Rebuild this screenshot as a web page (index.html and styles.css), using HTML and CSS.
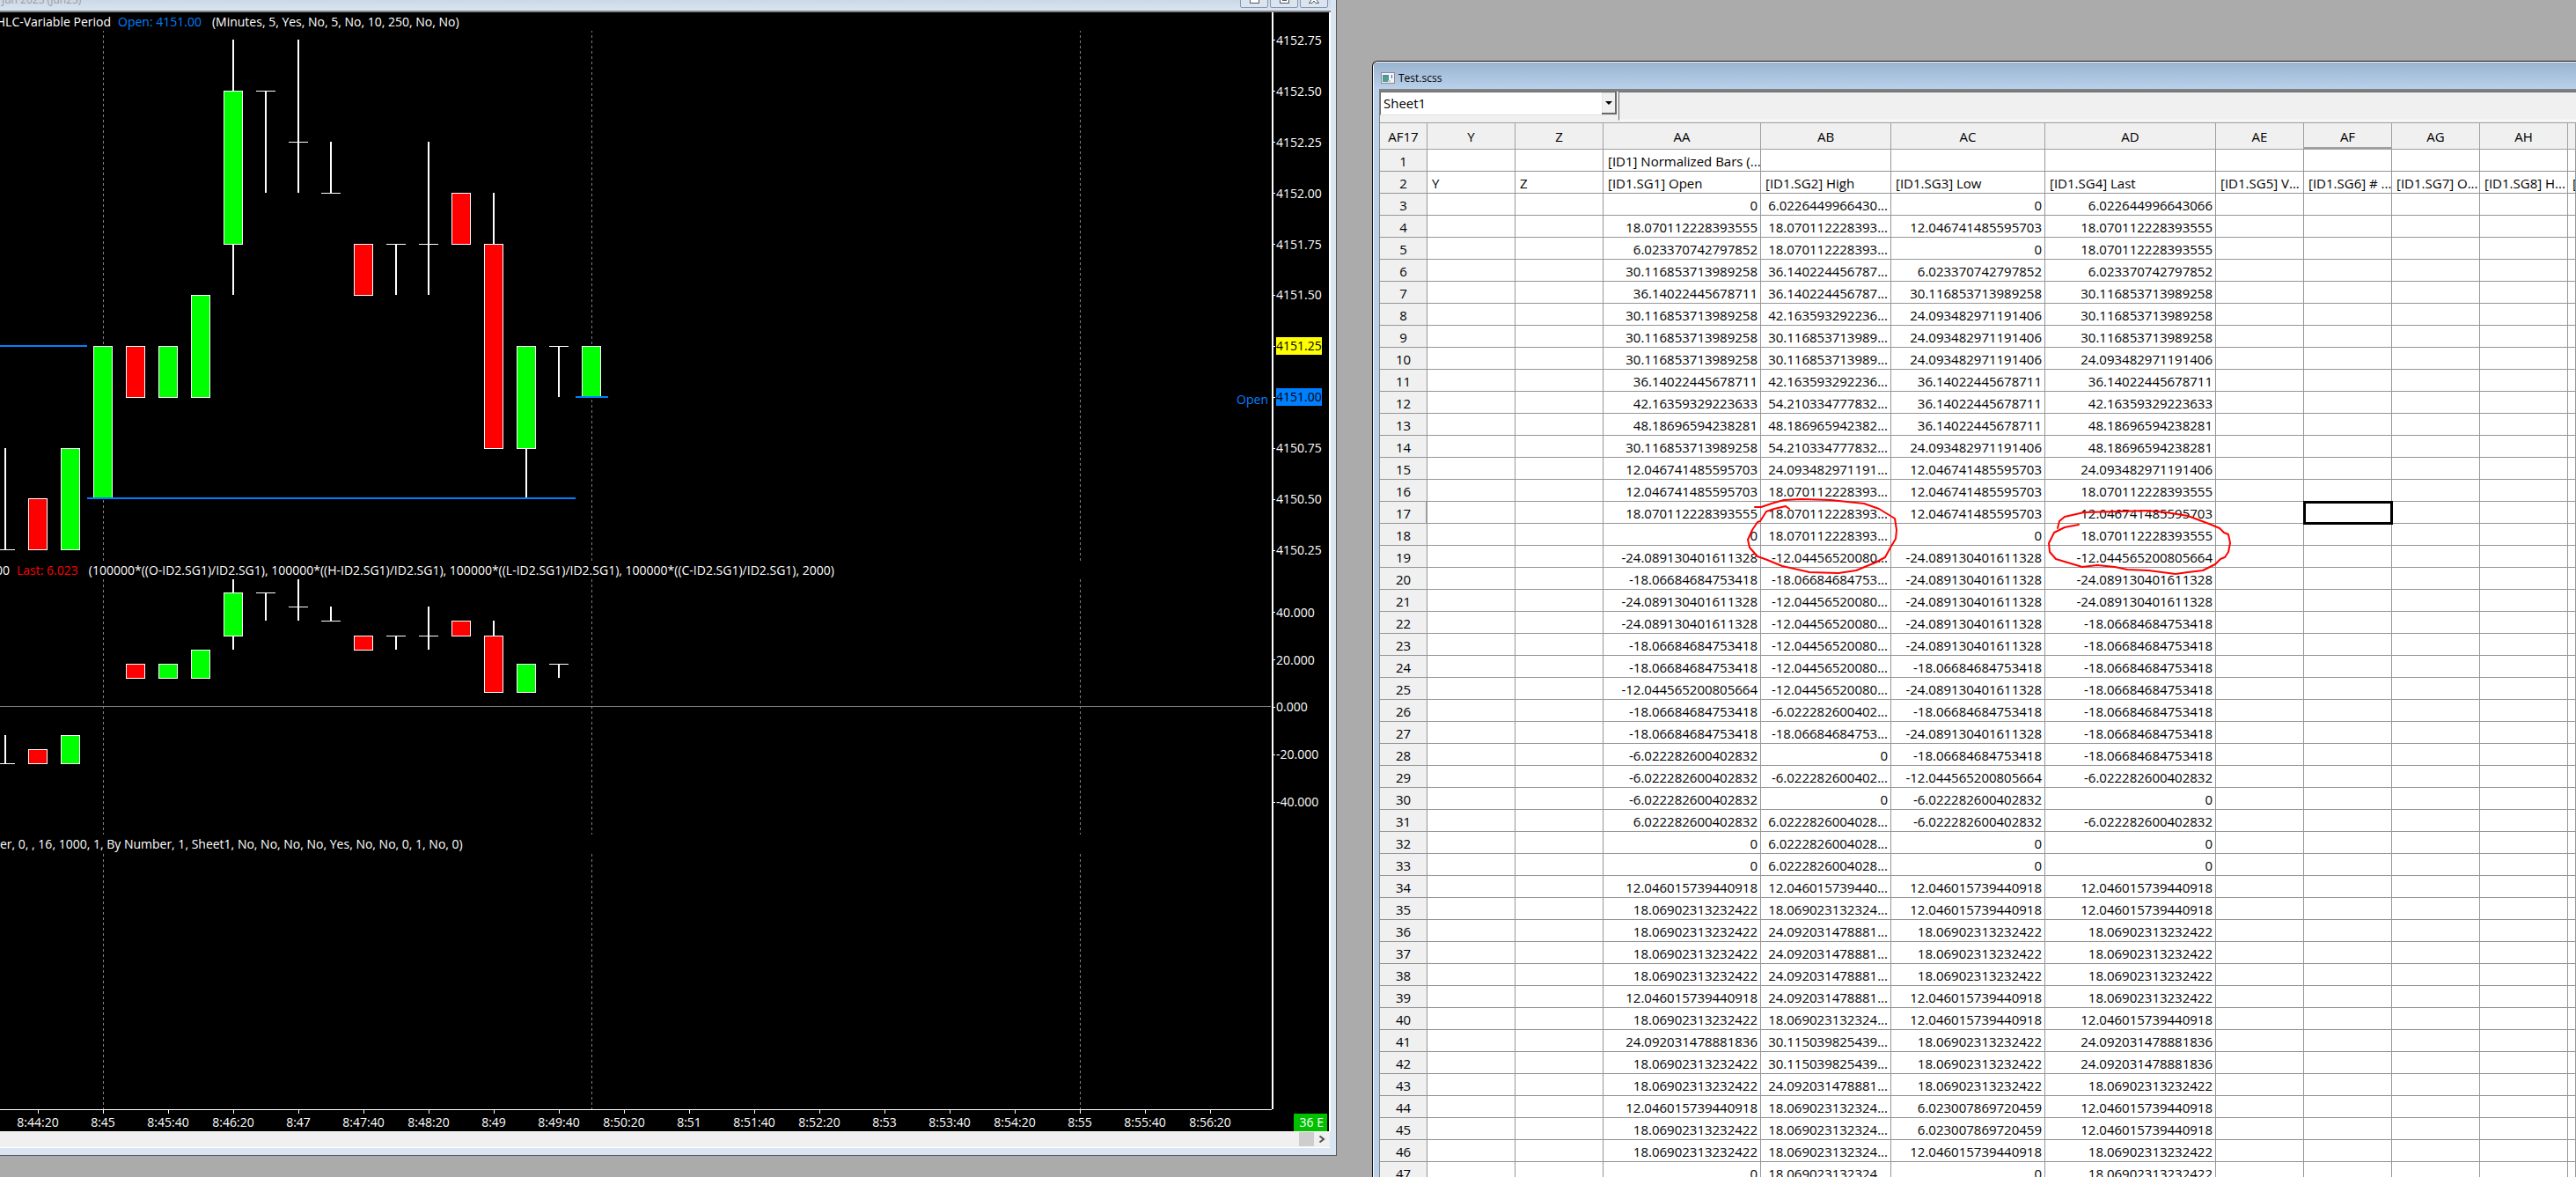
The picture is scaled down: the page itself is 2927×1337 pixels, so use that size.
FILE: index.html
```html
<!DOCTYPE html>
<html lang="en">
<head>
<meta charset="utf-8">
<title>Trading workspace</title>
<link rel="stylesheet" href="styles.css">
</head>
<body>
<main class="desktop">
  <section class="chart-window" aria-label="Chart">
    <header class="chart-title">
      <span class="chart-name">Jun 2023 (Jun23)</span>
      <div class="window-buttons">
        <button type="button" aria-label="Minimize"><svg width="12" height="12" viewBox="0 0 12 12"><rect x="1.5" y="5.5" width="10" height="5" fill="#fff" stroke="#555a68"/></svg></button>
        <button type="button" aria-label="Restore"><svg width="12" height="12" viewBox="0 0 12 12"><rect x="1.5" y="1.500" width="10" height="9" fill="#fff" stroke="#555a68"/><rect x="4.500" y="5.500" width="4" height="2" fill="#cfdbe8" stroke="#555a68"/></svg></button>
        <button type="button" aria-label="Close"><svg width="12" height="12" viewBox="0 0 12 12"><path d="M1 1h3l2 2 2-2h3L8 5.500l3.500 5H8L6 8l-2 2.500H.5L4 5.500z" fill="#fff" stroke="#555a68"/></svg></button>
      </div>
    </header>
    <div class="chart-client">
      <div class="chart-panes">
        <div class="pane-head">
          <span class="head-clip study-name">HLC-Variable Period</span>
          <span class="open">Open: 4151.00</span>
          <span>(Minutes, 5, Yes, No, 5, No, 10, 250, No, No)</span>
        </div>
        <div class="pane pane-price">
          <svg id="price" viewBox="0 35 1445 602" preserveAspectRatio="none"></svg>
          <span class="open-tag">Open</span>
        </div>
        <div class="pane-head">
          <span class="head-clip last-name">00</span>
          <span class="last">Last: 6.023</span>
          <span>(100000*((O-ID2.SG1)/ID2.SG1), 100000*((H-ID2.SG1)/ID2.SG1), 100000*((L-ID2.SG1)/ID2.SG1), 100000*((C-ID2.SG1)/ID2.SG1), 2000)</span>
        </div>
        <div class="pane pane-norm"><svg id="norm" viewBox="0 658 1445 290" preserveAspectRatio="none"></svg></div>
        <div class="pane-head">
          <span>er, 0, , 16, 1000, 1, By Number, 1, Sheet1, No, No, No, No, Yes, No, No, 0, 1, No, 0)</span>
        </div>
        <div class="pane pane-sheet"><svg id="blank" viewBox="0 969 1445 291" preserveAspectRatio="none"></svg></div>
      </div>
      <div class="axis">
        <ol class="scale scale-price">
          <li>4152.75</li><li>4152.50</li><li>4152.25</li><li>4152.00</li><li>4151.75</li><li>4151.50</li>
          <li><mark class="mark-last">4151.25</mark></li>
          <li><mark class="mark-open">4151.00</mark></li>
          <li>4150.75</li><li>4150.50</li><li>4150.25</li>
        </ol>
        <ol class="scale scale-norm">
          <li>40.000</li><li>20.000</li><li>0.000</li><li>-20.000</li><li>-40.000</li>
        </ol>
      </div>
      <ol class="times">
        <li>8:44:20</li><li>8:45</li><li>8:45:40</li><li>8:46:20</li><li>8:47</li><li>8:47:40</li><li>8:48:20</li><li>8:49</li><li>8:49:40</li><li>8:50:20</li><li>8:51</li><li>8:51:40</li><li>8:52:20</li><li>8:53</li><li>8:53:40</li><li>8:54:20</li><li>8:55</li><li>8:55:40</li><li>8:56:20</li>
      </ol>
      <div class="corner"><span class="badge">36 E</span></div>
    </div>
    <div class="scrollbar">
      <span class="thumb"></span>
      <button type="button" aria-label="Scroll right"><svg width="8" height="8" viewBox="0 0 8 8"><path d="M1.500 0.500 6 4 1.500 7.500" fill="none" stroke="#505050" stroke-width="2"/></svg></button>
    </div>
  </section>

  <section class="sheet-window" aria-label="Spreadsheet">
    <header class="sheet-title">
      <svg width="16" height="14" viewBox="0 0 16 14"><rect x=".5" y=".5" width="15" height="12" fill="#f4f4f4" stroke="#8b8b93"/><rect x="2" y="3" width="7" height="8" fill="#4f93a8"/><rect x="3" y="6" width="5" height="4" fill="#4ea577"/><rect x="12" y="3" width="1" height="4" fill="#2c6fa8"/><rect x="8" y="9" width="3" height="2" fill="#c9c9c9"/></svg>
      <span>Test.scss</span>
    </header>
    <div class="sheet-client">
      <div class="sheet-tools">
        <div class="sheet-pick">
          <select aria-label="Sheet"><option>Sheet1</option></select>
          <span class="pick-arrow"></span>
        </div>
        <input class="formula" type="text" aria-label="Formula">
      </div>
      <div class="grid-area">
        <table class="grid">
          <colgroup>
            <col class="c-num"><col class="c-std"><col class="c-std"><col class="c-open"><col class="c-high"><col class="c-low"><col class="c-last"><col class="c-std"><col class="c-std"><col class="c-std"><col class="c-std"><col>
          </colgroup>
          <thead>
            <tr><th>AF17</th><th>Y</th><th>Z</th><th>AA</th><th>AB</th><th>AC</th><th>AD</th><th>AE</th><th class="col-active">AF</th><th>AG</th><th>AH</th><th></th></tr>
          </thead>
          <tbody id="rows">
            <tr class="names"><th>1</th><td></td><td></td><td>[ID1] Normalized Bars (...</td><td></td><td></td><td></td><td></td><td></td><td></td><td></td><td></td></tr>
            <tr class="names"><th>2</th><td>Y</td><td>Z</td><td>[ID1.SG1] Open</td><td>[ID1.SG2] High</td><td>[ID1.SG3] Low</td><td>[ID1.SG4] Last</td><td>[ID1.SG5] V...</td><td>[ID1.SG6] # ...</td><td>[ID1.SG7] O...</td><td>[ID1.SG8] H...</td><td>[</td></tr>
          </tbody>
        </table>
        <svg class="ink" width="1000" height="600" viewBox="1568 139 1000 600" aria-hidden="true">
          <path d="M1994 576H2001L2016 571 2027 568 2047 567 2080 568 2118 572 2135 578 2153 589 2155 602 2154 612 2148 622 2142 633 2131 639 2109 648 2089 651 2056 650 2025 643 2008 636 1997 632 1988 622 1986 613 1991 602 1997 593 2000 592 2007 581 2016 578 2029 575 2033 578"/>
          <path d="M2338 600 2340 592 2346 587 2368 582 2408 581 2439 580 2461 582 2486 586 2510 595 2522 600 2527 605 2532 607 2534 617 2532 627 2528 633 2523 635 2517 641 2503 648 2486 650 2472 652 2441 648 2417 647 2403 644 2383 642 2366 644 2336 635 2329 627 2328 617 2332 609 2334 605 2346 599 2362 596"/>
        </svg>
      </div>
    </div>
  </section>
</main>
<script src="workspace.js"></script>
</body>
</html>
```

FILE: styles.css
```css
* { box-sizing: border-box; }

body {
  margin: 0;
  background: #ababab;
  color: #000;
  font: 14px/20px "Open Sans", "Noto Sans", sans-serif;
}

ol { margin: 0; padding: 0; list-style: none; }
button { padding: 0; font: inherit; }
svg { display: block; }

.desktop {
  display: grid;
  grid-template-columns: 1519fr 1368fr;
  column-gap: 40px;
  height: 100vh;
  overflow: hidden;
}

/* chart window */
.chart-window {
  display: flex;
  flex-direction: column;
  height: calc(100vh - 24px);
  padding-right: 6px;
  padding-bottom: 8px;
  border-right: 1px solid #55585e;
  border-bottom: 1px solid #55585e;
  background: #d9e5f1;
}

.chart-title {
  display: flex;
  flex: none;
  justify-content: space-between;
  align-items: flex-end;
  height: 14px;
  padding-left: 2px;
  border-bottom: 2px solid #7f8487;
  background: linear-gradient(#cbd8e6, #d9e5f1);
}

.chart-name {
  align-self: flex-start;
  margin-top: -10px;
  color: #9b9b9b;
  font-size: 12px;
  line-height: 20px;
}

.window-buttons { display: flex; gap: 2px; margin-top: -16px; align-self: flex-start; padding-right: 3px; }

.window-buttons button {
  display: flex;
  justify-content: center;
  align-items: flex-end;
  width: 32px;
  height: 25px;
  padding-bottom: 3px;
  border: 1px solid #8996b1;
  border-radius: 2px;
  background: #dbe5f0;
}

.chart-client {
  display: grid;
  grid-template: minmax(0, 1fr) 25px / minmax(0, 1fr) 65px;
  flex: 1;
  min-height: 0;
  border-right: 2px solid #fff;
  background: #000;
  color: #fff;
}

.chart-panes { display: flex; flex-direction: column; min-height: 0; }

.pane-head {
  display: flex;
  flex: none;
  height: 21px;
  overflow: hidden;
  line-height: 22px;
  white-space: pre;
}

.head-clip { display: flex; flex: none; justify-content: flex-end; overflow: hidden; }
.study-name { width: 126px; margin-right: 8px; }
.last-name { width: 11px; margin-right: 8px; }
.open { margin-right: 12px; color: #0080ff; }
.last { margin-right: 12px; color: #f00; }

.pane { position: relative; min-height: 0; }
.pane svg { width: 100%; height: 100%; }
.pane-price { flex: 602 1 0; }
.pane-norm { flex: 290 1 0; }
.pane-sheet { flex: 291 1 0; }

.open-tag { position: absolute; right: 4px; top: 68%; color: #0080ff; }

.day-line { stroke: #808080; stroke-dasharray: 3 3; }
.zero-line { stroke: #808080; }
.open-line { stroke: #0080ff; stroke-width: 2; }
.wick { stroke: #fff; stroke-width: 2; }
.tick { stroke: #fff; }
.up { fill: #0f0; stroke: #fff; }
.down { fill: #f00; stroke: #fff; }

.axis {
  display: flex;
  flex-direction: column;
  min-height: 0;
  padding-top: 3px;
  border-left: 2px solid #fff;
}

.scale { display: flex; flex-direction: column; }
.scale li { display: flex; flex: 1; align-items: center; gap: 1px; }
.scale li::before { content: ""; width: 2px; height: 1px; background: #fff; }
.scale-price { flex: 637 1 0; }
.scale-norm { flex: 269 1 0; margin-top: 15px; }
.axis::after { content: ""; flex: 322 1 0; }

mark { color: #000; }
.mark-last { background: #ff0; }
.mark-open { background: #0080ff; }

.times {
  display: flex;
  padding: 0 33px 0 6px;
  border-top: 1px solid #fff;
}

.times li {
  display: flex;
  flex: 1;
  flex-direction: column;
  align-items: center;
}

.times li::before { content: ""; flex: none; width: 1px; height: 4px; background: #fff; }

.corner { display: flex; justify-content: flex-end; align-items: flex-end; }

.badge {
  width: 38px;
  height: 20px;
  padding-right: 4px;
  margin-right: 2px;
  background: #00c000;
  text-align: right;
}

.scrollbar {
  display: flex;
  flex: none;
  justify-content: flex-end;
  height: 19px;
  margin-right: 1px;
  padding: 1px 0 1px;
  border-bottom: 1px solid #fff;
  background: #f0f0f0;
}

.thumb { width: 17px; background: #cdcdcd; }

.scrollbar button {
  display: flex;
  justify-content: center;
  align-items: center;
  width: 18px;
  border: 0;
  background: none;
}

/* spreadsheet window */
.sheet-window {
  display: flex;
  flex-direction: column;
  min-width: 0;
  min-height: 0;
  margin-top: 69px;
  padding-left: 7px;
  border: solid #111;
  border-width: 1px 0 0 1px;
  border-radius: 6px 0 0 0;
  background: #b9d1ea;
  overflow: hidden;
  box-shadow: inset 1px 1px #fff;
}

.sheet-title {
  display: flex;
  flex: none;
  align-items: center;
  gap: 4px;
  height: 30px;
  margin: 1px 0 0 -6px;
  padding: 6px 0 0 8px;
  background: linear-gradient(#9ab3d0, #b9d1ea);
  font-size: 12px;
}

.sheet-client {
  display: flex;
  flex: 1;
  flex-direction: column;
  min-height: 0;
  border: solid #808080;
  border-width: 3px 0 0 1px;
  background: #f0f0f0;
}

.sheet-tools {
  display: flex;
  flex: none;
  align-items: flex-start;
  gap: 2px;
  height: 35px;
}

.sheet-pick {
  display: flex;
  align-items: stretch;
  width: 269px;
  height: 27px;
  border: solid #696969;
  border-width: 1px 0 1px 1px;
  border-bottom-color: #e3e3e3;
  background: #fff;
}

.sheet-pick select {
  flex: 1;
  min-width: 0;
  padding: 0 3px 2px;
  border: 0;
  background: none;
  color: #000;
  font: inherit;
  font-size: 15px;
  appearance: none;
}

.pick-arrow {
  display: flex;
  justify-content: center;
  align-items: center;
  width: 17px;
  border: solid #696969;
  border-width: 0 2px 2px 0;
  background: #f0f0f0;
  box-shadow: inset 1px 1px #e3e3e3;
  pointer-events: none;
}

.pick-arrow::before {
  content: "";
  border: solid transparent;
  border-width: 4px 4px 0;
  border-top-color: #000;
}

.formula {
  flex: 1;
  min-width: 0;
  height: 33px;
  border: solid #696969;
  border-width: 1px 0 1px 1px;
  border-bottom-color: #fff;
  background: #f0f0f0;
}

.grid-area { position: relative; flex: 1; min-height: 0; overflow: hidden; }

.grid {
  width: 100%;
  border-collapse: separate;
  border-spacing: 0;
  border-top: 1px solid #a0a0a0;
  table-layout: fixed;
  background: #fff;
  font-size: 15px;
}

.c-num { width: 54px; }
.c-std { width: 100px; }
.c-open { width: 179px; }
.c-high { width: 148px; }
.c-low { width: 175px; }
.c-last { width: 194px; }

.grid th, .grid td {
  height: 25px;
  padding: 1px 3px 0 5px;
  border: solid #969696;
  border-width: 0 1px 1px 0;
  line-height: 20px;
  font-weight: 400;
  white-space: nowrap;
  overflow: hidden;
}

.grid th { padding: 1px 0 0; background: #f0f0f0; text-align: center; }
.grid thead th { height: 30px; border-color: #a0a0a0; }
.grid td { text-align: right; }
.grid .names td { text-align: left; }
.grid .col-active { box-shadow: inset 0 -2px #a0a0a0; }
.grid .row-active { box-shadow: inset -1px 0 #a0a0a0; }
.grid .cell-active { outline: 3px solid #000; outline-offset: -2px; }

.ink { position: absolute; left: 0; top: 0; fill: none; stroke: #f00; stroke-width: 2; stroke-linejoin: round; stroke-linecap: round; }
```

FILE: workspace.js
```js
// Spreadsheet values: Open, High, Low, Last; the first entry is row 3.
const A = "12.046741485595703", B = "18.070112228393555", C = "24.093482971191406",
      D = "30.116853713989258", E = "36.14022445678711", F = "42.16359329223633",
      G = "48.18696594238281", S = "6.023370742797852";
const a = "-12.044565200805664", b = "-18.06684684753418", c = "-24.089130401611328", s = "-6.022282600402832";
const P = "12.046015739440918", Q = "18.06902313232422", R = "24.092031478881836", T = "6.023007869720459";
const Bh = "18.070112228393...", Eh = "36.140224456787...", ah = "-12.04456520080...", bh = "-18.06684684753...";
const sh = "-6.022282600402...", uh = "6.0222826004028...", Qh = "18.069023132324...", Rh = "24.092031478881...", Vh = "30.115039825439...";

const values = [
  ["0", "6.0226449966430...", "0", "6.022644996643066"],
  [B, Bh, A, B],
  [S, Bh, "0", B],
  [D, Eh, S, S],
  [E, Eh, D, D],
  [D, "42.163593292236...", C, D],
  [D, "30.116853713989...", C, D],
  [D, "30.116853713989...", C, C],
  [E, "42.163593292236...", E, E],
  [F, "54.210334777832...", E, F],
  [G, "48.186965942382...", E, G],
  [D, "54.210334777832...", C, G],
  [A, "24.093482971191...", A, C],
  [A, Bh, A, B],
  [B, Bh, A, A],
  ["0", Bh, "0", B],
  [c, ah, c, a],
  [b, bh, c, c],
  [c, ah, c, c],
  [c, ah, c, b],
  [b, ah, c, b],
  [b, ah, b, b],
  [a, ah, c, b],
  [b, sh, b, b],
  [b, bh, c, b],
  [s, "0", b, b],
  [s, sh, a, s],
  [s, "0", s, "0"],
  ["6.022282600402832", uh, s, s],
  ["0", uh, "0", "0"],
  ["0", uh, "0", "0"],
  [P, "12.046015739440...", P, P],
  [Q, Qh, P, P],
  [Q, Rh, Q, Q],
  [Q, Rh, Q, Q],
  [Q, Rh, Q, Q],
  [P, Rh, P, Q],
  [Q, Qh, P, P],
  [R, Vh, Q, R],
  [Q, Vh, Q, R],
  [Q, Rh, Q, Q],
  [P, Qh, T, P],
  [Q, Qh, T, P],
  [Q, Qh, P, Q],
  ["0", Qh, "0", Q]
];

const body = document.getElementById("rows");
values.forEach((row, i) => {
  const tr = body.insertRow();
  const head = document.createElement("th");
  head.textContent = i + 3;
  tr.append(head);
  ["", "", ...row, "", "", "", "", ""].forEach(v => { tr.insertCell().textContent = v; });
  if (i + 3 === 17) {
    head.className = "row-active";
    tr.cells[8].className = "cell-active";
  }
});

// Bars: slot, kind (u up, d down, t flat), body top, body bottom, wick top, wick bottom.
const price = [
  [0, "t", 624, 624, 509, 624], [1, "d", 566, 624], [2, "u", 509, 624], [3, "u", 393, 566],
  [4, "d", 393, 451], [5, "u", 393, 451], [6, "u", 335, 451], [7, "u", 103, 277, 45, 335],
  [8, "t", 103, 103, 103, 219], [9, "t", 161, 161, 45, 219], [10, "t", 219, 219, 161, 219],
  [11, "d", 277, 335], [12, "t", 277, 277, 277, 335], [13, "t", 277, 277, 161, 335],
  [14, "d", 219, 277], [15, "d", 277, 509, 219, 509], [16, "u", 393, 509, 393, 566],
  [17, "t", 393, 393, 393, 451], [18, "u", 393, 451]
];
const norm = [
  [0, "t", 867, 867, 835, 867], [1, "d", 851, 867], [2, "u", 835, 867],
  [4, "d", 754, 770], [5, "u", 754, 770], [6, "u", 738, 770], [7, "u", 673, 722, 657, 738],
  [8, "t", 673, 673, 673, 705], [9, "t", 689, 689, 657, 705], [10, "t", 705, 705, 689, 705],
  [11, "d", 722, 738], [12, "t", 722, 722, 722, 738], [13, "t", 722, 722, 689, 738],
  [14, "d", 705, 722], [15, "d", 722, 786, 705, 786], [16, "u", 754, 786], [17, "t", 754, 754, 754, 770]
];

const line = (cls, x1, y1, x2, y2) => `<line class="${cls}" x1="${x1}" y1="${y1}" x2="${x2}" y2="${y2}"/>`;
const days = (top, bottom) => [117, 672, 1227].map(x => line("day-line", x + .5, top, x + .5, bottom)).join("");
const bars = list => list.map(([slot, kind, top, bottom, high, low]) => {
  const x = 6 + 37 * slot;
  const wick = high === undefined ? "" : line("wick", x, high, x, low);
  if (kind === "t") return wick + line("tick", x - 11, top + .5, x + 11, top + .5);
  return wick + `<rect class="${kind === "u" ? "up" : "down"}" x="${x - 10.5}" y="${top + .5}" width="21" height="${bottom - top}"/>`;
}).join("");

document.getElementById("price").innerHTML = days(34, 637) + bars(price)
  + line("open-line", 0, 393, 99, 393) + line("open-line", 99, 566, 654, 566) + line("open-line", 654, 451, 691, 451);
document.getElementById("norm").innerHTML = days(658, 948) + line("zero-line", 0, 802.5, 1444, 802.5) + bars(norm);
document.getElementById("blank").innerHTML = days(970, 1260);
```
